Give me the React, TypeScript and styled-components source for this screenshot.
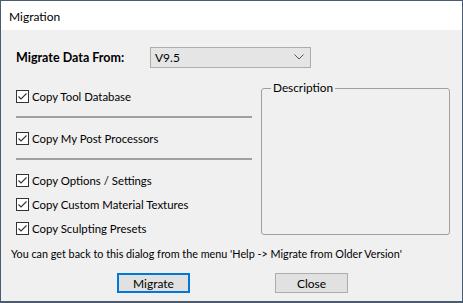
import styled, { createGlobalStyle } from "styled-components";

const GlobalStyle = createGlobalStyle`
  html, body {
    margin: 0;
    padding: 0;
    background: #ffffff;
  }
  body {
    font-family: "Segoe UI", Lato, "Noto Sans", sans-serif;
    font-size: 11.4px;
    color: #000;
  }
`;

const options = [
  { label: "Copy Tool Database", separator: true },
  { label: "Copy My Post Processors", separator: true },
  { label: "Copy Options / Settings", separator: false },
  { label: "Copy Custom Material Textures", separator: false },
  { label: "Copy Sculpting Presets", separator: false }
];

function CheckMark() {
  return (
    <svg width="11" height="11" viewBox="0 0 11 11">
      <path d="M1.5 5.5 L4 8 L9.5 2.5" fill="none" stroke="#333" strokeWidth="1.1" />
    </svg>
  );
}

function Chevron() {
  return (
    <svg width="10" height="6" viewBox="0 0 10 6">
      <path d="M0.5 0.5 L5 5 L9.5 0.5" fill="none" stroke="#555" strokeWidth="1" />
    </svg>
  );
}

export default function App() {
  return (
    <>
      <GlobalStyle />
      <Window>
        <TitleBar>Migration</TitleBar>
        <Body>
          <SourceRow>
            <SourceLabel>Migrate Data From:</SourceLabel>
            <Select>
              <span>V9.5</span>
              <Chevron />
            </Select>
          </SourceRow>
          <Columns>
            <OptionList>
              {options.map((o) => (
                <OptionItem key={o.label} $separator={o.separator}>
                  <CheckRow>
                    <CheckBox>
                      <CheckMark />
                    </CheckBox>
                    <span>{o.label}</span>
                  </CheckRow>
                  {o.separator && <Separator />}
                </OptionItem>
              ))}
            </OptionList>
            <GroupBox>
              <Legend>Description</Legend>
            </GroupBox>
          </Columns>
          <Note>
            You can get back to this dialog from the menu 'Help -&gt; Migrate from Older Version'
          </Note>
          <Buttons>
            <Button $primary>Migrate</Button>
            <Button>Close</Button>
          </Buttons>
        </Body>
      </Window>
    </>
  );
}

const Window = styled.div`
  width: 463px;
  height: 303px;
  box-sizing: border-box;
  border: 1px solid #4a5c6e;
  border-bottom-width: 2px;
  background: #f0f0f0;
  display: flex;
  flex-direction: column;
`;

const TitleBar = styled.div`
  height: 29px;
  background: #ffffff;
  display: flex;
  align-items: center;
  padding-left: 8px;
  padding-top: 1px;
  box-sizing: border-box;
  font-size: 12px;
  color: #000;
`;

const Body = styled.div`
  flex: 1;
  padding: 17px 0 0 15px;
  display: flex;
  flex-direction: column;
`;

const SourceRow = styled.div`
  display: flex;
  align-items: center;
  height: 21px;
`;

const SourceLabel = styled.div`
  width: 134px;
  font-weight: bold;
  font-size: 12.5px;
`;

const Select = styled.div`
  width: 161px;
  height: 21px;
  box-sizing: border-box;
  border: 1px solid #adadad;
  background: #e5e5e5;
  display: flex;
  align-items: center;
  justify-content: space-between;
  padding: 0 6px 1px 4px;
  font-size: 12px;
`;

const Columns = styled.div`
  display: flex;
  margin-top: 13px;
  height: 153px;
`;

const OptionList = styled.div`
  width: 236px;
  display: flex;
  flex-direction: column;
  padding-top: 5px;
`;

const OptionItem = styled.div<{ $separator: boolean }>`
  display: flex;
  flex-direction: column;
  margin-bottom: ${(p) => (p.$separator ? "10px" : "4px")};
`;

const CheckRow = styled.div`
  display: flex;
  align-items: center;
  height: 20px;
  gap: 3px;
`;

const CheckBox = styled.div`
  width: 13px;
  height: 13px;
  box-sizing: border-box;
  border: 1px solid #333333;
  background: #ffffff;
  display: flex;
  align-items: center;
  justify-content: center;
`;

const Separator = styled.div`
  height: 2px;
  background: #a0a0a0;
  margin-top: 10px;
`;

const GroupBox = styled.fieldset`
  margin: 0 0 0 9px;
  width: 189px;
  box-sizing: border-box;
  border: 1px solid #a0a0a0;
  border-radius: 3px;
  padding: 0 8px;
  height: 154px;
`;

const Legend = styled.legend`
  padding: 0 2px;
  margin-left: 1px;
  line-height: 14px;
  font-size: 11.8px;
  color: #000;
`;

const Note = styled.div`
  margin-top: 12px;
  margin-left: -5px;
  height: 16px;
  line-height: 16px;
  font-size: 10.8px;
  white-space: nowrap;
`;

const Buttons = styled.div`
  display: flex;
  margin-top: 11px;
  padding-left: 101px;
  gap: 85px;
`;

const Button = styled.div<{ $primary?: boolean }>`
  width: 73px;
  height: 20px;
  box-sizing: border-box;
  background: #e1e1e1;
  border: ${(p) => (p.$primary ? "2px solid #0078d7" : "1px solid #adadad")};
  display: flex;
  align-items: center;
  justify-content: center;
  font-size: 12px;
`;
